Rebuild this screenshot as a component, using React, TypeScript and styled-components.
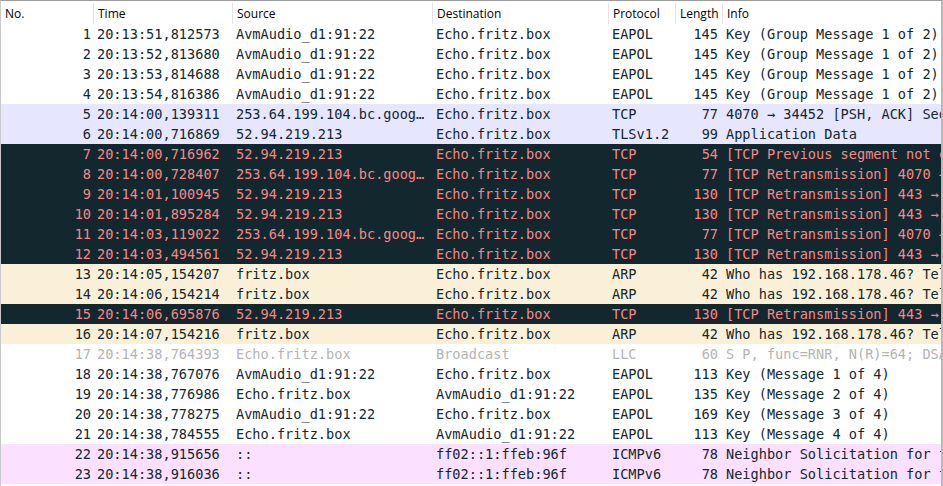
import React from "react";
import styled, { createGlobalStyle } from "styled-components";

const GlobalStyle = createGlobalStyle`
  html, body { margin: 0; padding: 0; background: #ffffff; overflow: hidden; }
  #root { width: 943px; height: 486px; }
`;

const COLS = "92px 139px 200px 176px 67px 47px 1fr";

type Kind = "plain" | "tcp" | "bad" | "arp" | "dim" | "icmp";

const palette: Record<Kind, { bg: string; fg: string }> = {
  plain: { bg: "#ffffff", fg: "#12272e" },
  tcp: { bg: "#e7e6ff", fg: "#12272e" },
  bad: { bg: "#12272e", fg: "#f78787" },
  arp: { bg: "#faf0d7", fg: "#12272e" },
  dim: { bg: "#ffffff", fg: "#b4b4b4" },
  icmp: { bg: "#fce0ff", fg: "#12272e" },
};

const Frame = styled.div`
  width: 943px;
  height: 486px;
  box-sizing: border-box;
  border-top: 1px solid #9c9c9c;
  border-left: 1px solid #c9c9c9;
  border-right: 2px solid #b9b9b9;
  overflow: hidden;
  display: flex;
  flex-direction: column;
  background: #ffffff;
`;

const Header = styled.div`
  display: grid;
  grid-template-columns: ${COLS};
  height: 23px;
  flex: 0 0 23px;
  font-family: "Open Sans", "Noto Sans", sans-serif;
  font-size: 12px;
  color: #000000;
`;

const HeadCell = styled.div<{ $first?: boolean }>`
  display: flex;
  align-items: center;
  padding: 0 0 0 4px;
  margin-top: 2px;
  border-left: ${(p) => (p.$first ? "none" : "1px solid #e3e3e3")};
  white-space: nowrap;
  overflow: hidden;
`;

const Row = styled.div<{ $kind: Kind }>`
  display: grid;
  grid-template-columns: ${COLS};
  height: 20px;
  flex: 0 0 20px;
  align-items: center;
  background: ${(p) => palette[p.$kind].bg};
  color: ${(p) => palette[p.$kind].fg};
  font-family: "DejaVu Sans Mono", "Liberation Mono", monospace;
  font-size: 13.6px;
`;

const Cell = styled.div<{ $right?: boolean }>`
  padding: 0 4px;
  white-space: pre;
  overflow: hidden;
  text-align: ${(p) => (p.$right ? "right" : "left")};
  line-height: 20px;
`;

const NumCell = styled(Cell)`
  padding: 0 2px 0 4px;
`;

type Pkt = [number, string, string, string, string, number, string, Kind];

const G = "253.64.199.104.bc.goog…";
const A = "AvmAudio_d1:91:22";
const E = "Echo.fritz.box";
const I = "52.94.219.213";

const packets: Pkt[] = [
  [1, "20:13:51,812573", A, E, "EAPOL", 145, "Key (Group Message 1 of 2)", "plain"],
  [2, "20:13:52,813680", A, E, "EAPOL", 145, "Key (Group Message 1 of 2)", "plain"],
  [3, "20:13:53,814688", A, E, "EAPOL", 145, "Key (Group Message 1 of 2)", "plain"],
  [4, "20:13:54,816386", A, E, "EAPOL", 145, "Key (Group Message 1 of 2)", "plain"],
  [5, "20:14:00,139311", G, E, "TCP", 77, "4070 → 34452 [PSH, ACK] Seq=1 Ack=1 Win=501 Len=23", "tcp"],
  [6, "20:14:00,716869", I, E, "TLSv1.2", 99, "Application Data", "tcp"],
  [7, "20:14:00,716962", I, E, "TCP", 54, "[TCP Previous segment not captured] 443 → 50322", "bad"],
  [8, "20:14:00,728407", G, E, "TCP", 77, "[TCP Retransmission] 4070 → 34452 [PSH, ACK]", "bad"],
  [9, "20:14:01,100945", I, E, "TCP", 130, "[TCP Retransmission] 443 → 50322 [PSH, ACK]", "bad"],
  [10, "20:14:01,895284", I, E, "TCP", 130, "[TCP Retransmission] 443 → 50322 [PSH, ACK]", "bad"],
  [11, "20:14:03,119022", G, E, "TCP", 77, "[TCP Retransmission] 4070 → 34452 [PSH, ACK]", "bad"],
  [12, "20:14:03,494561", I, E, "TCP", 130, "[TCP Retransmission] 443 → 50322 [PSH, ACK]", "bad"],
  [13, "20:14:05,154207", "fritz.box", E, "ARP", 42, "Who has 192.168.178.46? Tell 192.168.178.1", "arp"],
  [14, "20:14:06,154214", "fritz.box", E, "ARP", 42, "Who has 192.168.178.46? Tell 192.168.178.1", "arp"],
  [15, "20:14:06,695876", I, E, "TCP", 130, "[TCP Retransmission] 443 → 50322 [PSH, ACK]", "bad"],
  [16, "20:14:07,154216", "fritz.box", E, "ARP", 42, "Who has 192.168.178.46? Tell 192.168.178.1", "arp"],
  [17, "20:14:38,764393", E, "Broadcast", "LLC", 60, "S P, func=RNR, N(R)=64; DSAP NULL LSAP", "dim"],
  [18, "20:14:38,767076", A, E, "EAPOL", 113, "Key (Message 1 of 4)", "plain"],
  [19, "20:14:38,776986", E, A, "EAPOL", 135, "Key (Message 2 of 4)", "plain"],
  [20, "20:14:38,778275", A, E, "EAPOL", 169, "Key (Message 3 of 4)", "plain"],
  [21, "20:14:38,784555", E, A, "EAPOL", 113, "Key (Message 4 of 4)", "plain"],
  [22, "20:14:38,915656", "::", "ff02::1:ffeb:96f", "ICMPv6", 78, "Neighbor Solicitation for fe80::", "icmp"],
  [23, "20:14:38,916036", "::", "ff02::1:ffeb:96f", "ICMPv6", 78, "Neighbor Solicitation for fe80::", "icmp"],
];

const headers = ["No.", "Time", "Source", "Destination", "Protocol", "Length", "Info"];

export default function App() {
  return (
    <>
      <GlobalStyle />
      <Frame>
        <Header>
          {headers.map((h, i) => (
            <HeadCell key={h} $first={i === 0}>
              {h}
            </HeadCell>
          ))}
        </Header>
        {packets.map(([no, time, src, dst, proto, len, info, kind]) => (
          <Row key={no} $kind={kind}>
            <NumCell $right>{no}</NumCell>
            <Cell>{time}</Cell>
            <Cell>{src}</Cell>
            <Cell>{dst}</Cell>
            <Cell>{proto}</Cell>
            <Cell $right>{len}</Cell>
            <Cell>{info}</Cell>
          </Row>
        ))}
      </Frame>
    </>
  );
}
